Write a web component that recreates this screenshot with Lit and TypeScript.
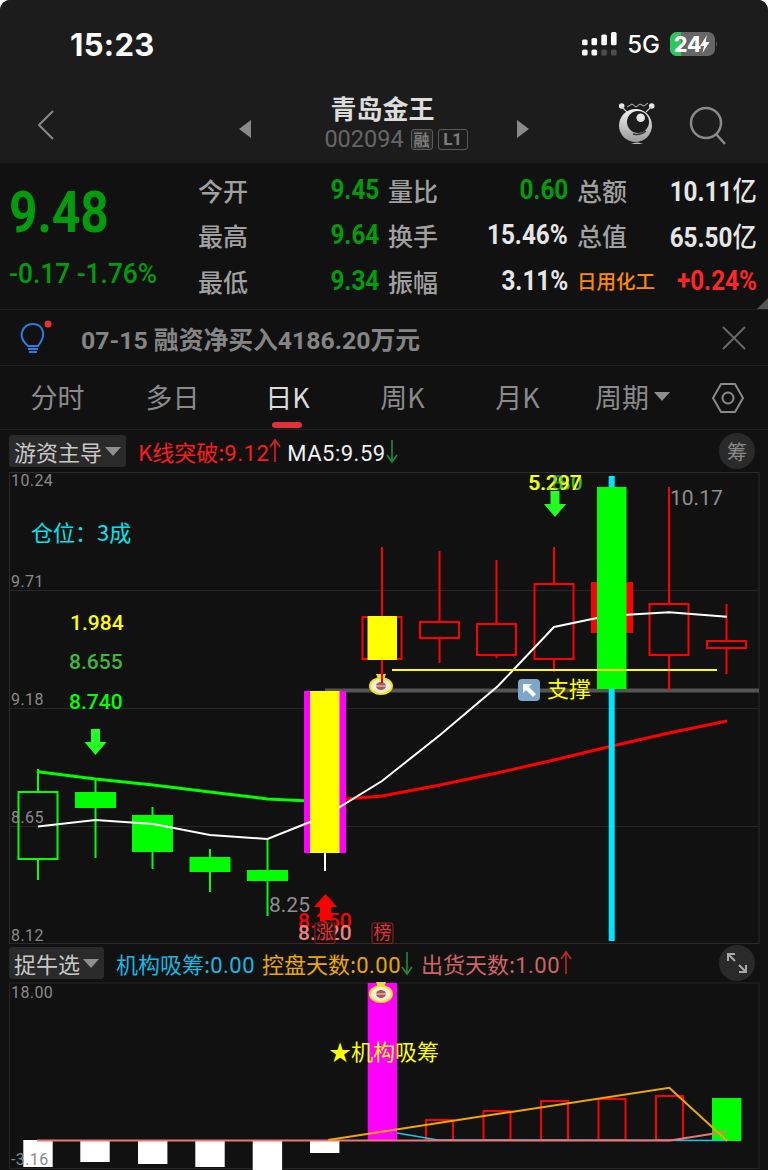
import { LitElement, html, svg, css } from 'lit';
import { customElement } from 'lit/decorators.js';

type Candle = {
    cx: number;
    top: number;
    bottom: number;
    high: number;
    low: number;
    color: string;
    filled: boolean;
};

const GREEN = '#00ff00';
const RED = '#ff0000';

const candles: Candle[] = [
    { cx: 38, top: 792, bottom: 859, high: 769, low: 880, color: GREEN, filled: false },
    { cx: 95.5, top: 793, bottom: 807, high: 779, low: 858, color: GREEN, filled: true },
    { cx: 152.5, top: 816, bottom: 851, high: 807, low: 869, color: GREEN, filled: true },
    { cx: 210, top: 858, bottom: 871, high: 849, low: 892, color: GREEN, filled: true },
    { cx: 267.5, top: 871, bottom: 880, high: 839, low: 916, color: GREEN, filled: true },
    { cx: 382, top: 617, bottom: 659, high: 547, low: 683, color: RED, filled: false },
    { cx: 439.5, top: 622, bottom: 638, high: 551, low: 663, color: RED, filled: false },
    { cx: 496.5, top: 624, bottom: 655, high: 560, low: 658, color: RED, filled: false },
    { cx: 554, top: 584, bottom: 659, high: 547, low: 672, color: RED, filled: false },
    { cx: 669, top: 604, bottom: 655, high: 487, low: 690, color: RED, filled: false },
    { cx: 726.5, top: 641, bottom: 648, high: 604, low: 674, color: RED, filled: false },
];

const MA5 = '38,826.5 95.5,820 153,824 210,835 267.5,839 325,816 382,781 440,735 498,686 554,627 597,618 627,614.7 669,612.3 727,616.7';
const MA_GREEN = '38,771.7 95.5,779 153,785 210,792 267.5,799 304,800.7';
const MA_RED = '346,799 382,796 440,785 497,773 554,760 612,746 669,733 727,721';

const moneyBag = (x: number, y: number) => svg`
    <g transform="translate(${x} ${y})">
        <path d="M-5 -11 L5 -11 L3 -6 L-3 -6 Z" fill="#e8d84a" />
        <ellipse cx="0" cy="1" rx="11" ry="8" fill="#f4f0d8" stroke="#f2e21c" stroke-width="2" />
        <ellipse cx="0" cy="1" rx="5" ry="4" fill="#a85a5a" />
        <line x1="-5" y1="1" x2="5" y2="1" stroke="#f0dede" stroke-width="1" />
    </g>
`;

const downArrow = (x: number, y: number) => svg`
    <polygon
        points="${x - 4.5},${y} ${x + 4.5},${y} ${x + 4.5},${y + 13} ${x + 11},${y + 13} ${x},${y + 26} ${x - 11},${y + 13} ${x - 4.5},${y + 13}"
        fill="#22ff22"
    />
`;

@customElement('kline-chart')
class KlineChart extends LitElement {
    static styles = css`
      :host {
        display: block;
        height: 472px;
      }

      svg {
        display: block;
      }

      text {
        font-family: Roboto, "Noto Sans CJK SC", sans-serif;
      }

      .axis {
        fill: #8a8a8a;
        font-size: 16px;
        letter-spacing: 0.4px;
      }

      .big {
        fill: #8e8e8e;
        font-size: 21px;
      }

      .note {
        font-size: 21px;
        font-weight: 500;
      }

      text.cjk {
        font-family: "Noto Sans CJK SC", sans-serif;
      }
    `;

    private candle(c: Candle) {
        return svg`
            <line x1=${c.cx} x2=${c.cx} y1=${c.high} y2=${c.filled ? c.low : c.top} stroke=${c.color} stroke-width="2" />
            ${c.filled
                ? null
                : svg`<line x1=${c.cx} x2=${c.cx} y1=${c.bottom} y2=${c.low} stroke=${c.color} stroke-width="2" />`}
            <rect
                x=${c.cx - 19.5}
                y=${c.top}
                width="39"
                height=${c.bottom - c.top}
                fill=${c.filled ? c.color : 'none'}
                stroke=${c.color}
                stroke-width="2"
            />
        `;
    }

    protected render() {
        return html`
            <svg width="768" height="472" viewBox="0 472 768 472">
                <g stroke="#262626" stroke-width="1" fill="none">
                    <rect x="9.5" y="472.5" width="749.5" height="471" stroke="#2a2a2a" />
                    <line x1="10" x2="759" y1="590.5" y2="590.5" />
                    <line x1="10" x2="759" y1="708.5" y2="708.5" />
                    <line x1="10" x2="759" y1="826.5" y2="826.5" />
                </g>

                <line x1="325" x2="759" y1="690.5" y2="690.5" stroke="#555" stroke-width="4" />

                <polyline points=${MA_GREEN} fill="none" stroke=${GREEN} stroke-width="3" />
                <polyline points=${MA_RED} fill="none" stroke=${RED} stroke-width="3" />

                ${candles.map((c) => this.candle(c))}

                <rect x="591" y="582" width="42" height="51" fill=${RED} />

                <rect x="304" y="691" width="42" height="162" fill="#ff00ff" />
                <line x1="325" x2="325" y1="853" y2="871" stroke="#fff" stroke-width="2" />
                <polyline points=${MA5} fill="none" stroke="#fff" stroke-width="2" />
                <rect x="310" y="691" width="29.5" height="162" fill="#ffff00" />
                <rect x="367.5" y="616" width="29.5" height="44" fill="#ffff00" />

                <rect x="608.7" y="476" width="6" height="465" fill="#00e5ff" />
                <rect x="597" y="487" width="29.5" height="202" fill=${GREEN} />

                ${moneyBag(381, 685)}
                <line x1="382" x2="382" y1="660" y2="683" stroke=${RED} stroke-width="2" />
                <line x1="392" x2="717" y1="670" y2="670" stroke="#ffff00" stroke-width="2" />

                <text class="axis" x="11" y="486">10.24</text>
                <text class="axis" x="11" y="587">9.71</text>
                <text class="axis" x="11" y="705">9.18</text>
                <text class="axis" x="11" y="823">8.65</text>
                <text class="axis" x="11" y="941">8.12</text>

                <rect x="518" y="679" width="22" height="22" rx="4" fill="#7ea6c8" />
                <path d="M523 684 H532 L529 687 L536 694 L533 697 L526 690 L523 693 Z" fill="#fff" />
                <text class="cjk" x="547" y="697" font-size="22" fill="#ffff00">支撑</text>

                <text class="cjk" x="31" y="541" font-size="22" fill="#00e5ee">仓位：3成</text>
                <text class="note" x="70" y="630" fill="#ffff00">1.984</text>
                <text class="note" x="69" y="669" fill="#3cb83c">8.655</text>
                <text class="note" x="69" y="709" fill=${GREEN}>8.740</text>
                ${downArrow(95.5, 729)}

                ${downArrow(555, 491)}
                <text class="note" x="529" y="490" fill="#3cb83c">5.280</text>
                <text class="note" x="528" y="490" fill="#ffff00">5.297</text>
                <text class="note" x="546" y="490" fill="#3cb83c" fill-opacity="0.6">.8</text>

                <text class="big" x="670" y="505">10.17</text>
                <text class="big" x="269" y="912">8.25</text>

                <polygon
                    points="325.5,894 337,907 331,907 331,920 320,920 320,907 314,907"
                    fill=${RED}
                />
                <text class="note" x="298" y="928" fill=${RED}>8.350</text>
                <text class="note" x="298" y="940" fill="#f08080">8.320</text>
                <rect x="315" y="923" width="20" height="20.500" rx="2" fill="#111" fill-opacity="0.85" stroke="#a02020" />
                <text class="cjk" x="325" y="939" font-size="18" text-anchor="middle" fill="#e03030">涨</text>
                <rect x="372" y="923" width="21" height="20.500" rx="2" fill="none" stroke="#a02020" />
                <text class="cjk" x="382.5" y="939" font-size="18" text-anchor="middle" fill="#e03030">榜</text>
            </svg>
        `;
    }
}

const subBars = [
    { x: 23.3, bottom: 1167 },
    { x: 80.3, bottom: 1162 },
    { x: 138, bottom: 1164 },
    { x: 195.3, bottom: 1167 },
    { x: 252.7, bottom: 1170 },
    { x: 310, bottom: 1153 },
];

const subHollow = [
    { x: 426, top: 1120 },
    { x: 483.5, top: 1111 },
    { x: 541, top: 1101 },
    { x: 598.5, top: 1099 },
    { x: 656, top: 1096 },
];

@customElement('sub-chart')
class SubChart extends LitElement {
    static styles = css`
      :host {
        display: block;
        height: 188px;
      }

      svg {
        display: block;
      }

      .axis {
        font-family: Roboto, sans-serif;
        fill: #8a8a8a;
        font-size: 16px;
        letter-spacing: 0.4px;
      }

      .label {
        font-family: "Noto Sans CJK SC", sans-serif;
        font-size: 22px;
        fill: #ffff00;
      }
    `;

    protected render() {
        return html`
            <svg width="768" height="188" viewBox="0 982 768 188">
                <rect x="9.5" y="983" width="749.5" height="185.5" fill="none" stroke="#262626" />
                <text class="axis" x="11" y="998">18.00</text>

                ${subBars.map(
                    (b) => svg`<rect x=${b.x} y="1140" width="29.4" height=${b.bottom - 1140} fill="#fff" />`
                )}
                <text class="axis" x="11" y="1165">-3.16</text>

                <rect x="367.7" y="983" width="29.4" height="158" fill="#ff00ff" />
                ${moneyBag(381, 993)}

                ${subHollow.map(
                    (b) => svg`
                        <rect
                            x=${b.x}
                            y=${b.top}
                            width="27"
                            height=${1140 - b.top}
                            fill="none"
                            stroke="#ff0000"
                            stroke-width="2"
                        />
                    `
                )}
                <rect x="712" y="1098" width="29.4" height="43" fill="#00ff00" />

                <polyline points="397,1133 438,1140 727,1140.5" fill="none" stroke="#18c8e8" stroke-width="1.5" />
                <polyline points="37,1140.5 670,1140.5 727,1131.5" fill="none" stroke="#e87878" stroke-width="2" />
                <polyline points="328,1140 669.3,1087.7 727.3,1141" fill="none" stroke="#f0a800" stroke-width="2" />

                <text class="label" x="329" y="1060">★机构吸筹</text>
            </svg>
        `;
    }
}

@customElement('app-root')
class AppRoot extends LitElement {
    static styles = css`
      :host {
        display: block;
        width: 768px;
        height: 1170px;
        overflow: hidden;
        background: #fff;
        font-family: "Noto Sans CJK SC", sans-serif;
      }

      .screen {
        height: 1170px;
        background: #111111;
        border-radius: 10px 10px 0 0;
        overflow: hidden;
      }

      .num {
        font-family: Roboto, "Noto Sans CJK SC", sans-serif;
      }

      /* top part, status bar and stock title */
      .head {
        height: 163px;
        background: #1c1c1c;
        display: flex;
        flex-direction: column;
      }

      .status {
        height: 88px;
        display: flex;
        align-items: center;
        padding: 0 49px 0 70px;
        box-sizing: border-box;
      }

      .time {
        font-family: Inter, sans-serif;
        font-size: 31px;
        font-weight: 700;
        letter-spacing: 0.3px;
        color: #fff;
        flex: 1;
      }

      .net {
        font-family: Inter, sans-serif;
        font-size: 24px;
        font-weight: 500;
        color: #fff;
        margin: 0 10px;
      }

      .nav {
        flex: 1;
        display: flex;
        align-items: flex-start;
      }

      .back {
        width: 239px;
        padding: 22px 0 0 38px;
        box-sizing: border-box;
      }

      .pager {
        width: 12px;
        margin-top: 32px;
      }

      .title-box {
        width: 266px;
        display: flex;
        flex-direction: column;
        align-items: center;
        padding-top: 3px;
      }

      .title {
        font-size: 26px;
        font-weight: 700;
        line-height: 34px;
        margin-left: -3px;
        color: #dcdcdc;
      }

      .code {
        display: flex;
        align-items: center;
        gap: 5px;
        height: 24px;
        margin-top: 2px;
        margin-left: 24px;
        color: #666;
      }

      .code-no {
        font-size: 23.5px;
        margin-right: 2px;
      }

      .tag {
        height: 21px;
        border: 1px solid #5a5a5a;
        border-radius: 3px;
        background: #2a2a2a;
        box-sizing: border-box;
        display: flex;
        align-items: center;
        justify-content: center;
        font-size: 16px;
        font-weight: 700;
        color: #7c7c7c;
      }

      .tag-cn {
        width: 22px;
      }

      .tag-l1 {
        width: 30px;
        background: none;
        font-size: 17px;
      }

      .nav-icons {
        display: flex;
        align-items: flex-start;
        margin-left: 89px;
        gap: 31px;
        padding-top: 14px;
      }

      .search {
        margin-top: 4px;
      }

      /* quote block */
      .quote {
        height: 147px;
        position: relative;
        display: flex;
        box-sizing: border-box;
        border-bottom: 1px solid #1e1e1e;
      }

      .price {
        width: 198px;
        padding: 16px 0 0 9px;
        box-sizing: border-box;
        color: #009c0c;
      }

      .price-now {
        font-size: 57px;
        font-weight: 700;
        line-height: 68px;
        transform: scaleX(0.87);
        transform-origin: left;
      }

      .price-chg {
        margin-top: 11px;
        font-size: 28px;
        font-weight: 500;
        line-height: 32px;
        white-space: nowrap;
        transform: scaleX(0.94);
        transform-origin: left;
      }

      .stats {
        display: grid;
        grid-template-columns: 181px 9px 180px 9px 180px;
        grid-auto-rows: 45.5px;
        align-items: center;
        padding-top: 4px;
        width: 559px;
      }

      .cell {
        display: flex;
        justify-content: space-between;
        align-items: center;
        grid-column: span 1;
      }

      .gap {
        width: 9px;
      }

      .lbl {
        font-size: 25px;
        font-weight: 500;
        color: #a0a0a0;
      }

      .val {
        font-size: 27px;
        font-weight: 700;
        color: #e6e6e6;
        transform: scaleX(0.9);
        transform-origin: right;
        white-space: nowrap;
      }

      .val.down {
        color: #009c0c;
      }

      .val.up {
        color: #ff2626;
      }

      .val .unit {
        font-size: 27px;
        font-weight: 500;
      }

      .sector {
        font-size: 19.5px;
        font-weight: 500;
        color: #ff8a00;
      }

      .corner {
        position: absolute;
        right: 0;
        bottom: 0;
        width: 0;
        height: 0;
        border-left: 11px solid transparent;
        border-bottom: 11px solid #555;
      }

      /* notice line */
      .notice {
        height: 56px;
        display: flex;
        align-items: center;
        box-sizing: border-box;
        border-bottom: 1px solid #1e1e1e;
        padding-left: 20px;
      }

      .notice-text {
        margin-left: 25px;
        flex: 1;
        font-size: 24.8px;
        font-weight: 700;
        color: #858585;
      }

      .notice svg:last-child {
        margin-right: 22px;
      }

      /* period tabs */
      .tabs {
        height: 64px;
        display: grid;
        grid-template-columns: repeat(6, 115px) auto;
        box-sizing: border-box;
        border-bottom: 1px solid #1e1e1e;
        position: relative;
      }

      .tab {
        display: flex;
        align-items: center;
        justify-content: center;
        gap: 5px;
        padding-bottom: 2px;
        font-size: 27px;
        color: #8a8a8a;
      }

      .tab.on {
        color: #dcdcdc;
      }

      .tab-bar {
        position: absolute;
        left: 272px;
        top: 56px;
        width: 30px;
        height: 6px;
        border-radius: 3px;
        background: #e0303a;
      }

      .tab-gear {
        display: flex;
        align-items: center;
        padding-left: 22px;
      }

      .tri {
        width: 0;
        height: 0;
        border-left: 8px solid transparent;
        border-right: 8px solid transparent;
        border-top: 9px solid #8e8e8e;
      }

      /* indicator rows */
      .ind {
        display: flex;
        align-items: center;
        padding-left: 9px;
        box-sizing: border-box;
        font-size: 22px;
        white-space: nowrap;
        position: relative;
      }

      .ind-main {
        height: 42px;
      }

      .ind-sub {
        height: 38px;
      }

      .picker {
        height: 32px;
        display: flex;
        align-items: center;
        gap: 3px;
        padding: 0 5px;
        border-radius: 3px;
        background: #2a2a2a;
        color: #c8c8c8;
        margin-right: 12px;
      }

      .ind span.v {
        font-family: Roboto, sans-serif;
        letter-spacing: 0.5px;
      }

      .round {
        position: absolute;
        right: 13px;
        top: 50%;
        margin-top: -18px;
        width: 36px;
        height: 36px;
        border-radius: 50%;
        background: #2a2a2a;
        color: #8a8a8a;
        display: flex;
        align-items: center;
        justify-content: center;
        font-size: 20px;
      }

      .red { color: #ff1a1a; }
      .white { color: #f2f2f2; margin-left: 6px; }
      .cyan { color: #16b8e0; }
      .orange { color: #e8a800; margin-left: 7px; }
      .pink { color: #d06464; margin-left: 8px; }
    `;

    private arrow(dir: 'up' | 'down', color: string) {
        const d = dir === 'up' ? 'M6 24 V3 M1 9 L6 2 L11 9' : 'M6 2 V23 M1 17 L6 24 L11 17';
        return html`<svg width="12" height="26" viewBox="0 0 12 26" fill="none" stroke=${color} stroke-width="1.6">
            <path d=${d} />
        </svg>`;
    }

    private statusIcons() {
        const bars = [
            { x: 0, top: 7.5 },
            { x: 9.5, top: 6 },
            { x: 19.3, top: 2.5 },
            { x: 29, top: 0 },
        ];
        return html`
            <svg width="35" height="24" viewBox="0 0 35 24">
                ${bars.map(
                    (b, i) => svg`
                        <rect x=${b.x} y=${b.top} width="5.6" height=${13.3 - b.top} rx="1.6" fill="#fff" />
                        <rect x=${b.x} y="17.6" width="5.6" height="6" rx="1.6" fill=${i < 2 ? '#fff' : '#4d4d4d'} />
                    `
                )}
            </svg>
            <span class="net">5G</span>
            <svg width="49" height="24" viewBox="0 0 49 24">
                <rect width="45" height="24" rx="7" fill="#666" />
                <path d="M7 0 H11 V24 H7 A7 7 0 0 1 0 17 V7 A7 7 0 0 1 7 0 Z" fill="#2fc75a" />
                <text
                    x="4"
                    y="20"
                    font-family="Inter, sans-serif"
                    font-size="21"
                    font-weight="800"
                    fill="#fff"
                >24</text>
                <path d="M37 3 L30 14 H34 L32.500 21 L39.500 10 H35.500 Z" fill="#fff" />
                <path d="M46 9 Q48.500 12 46 15 Z" fill="#555" />
            </svg>
        `;
    }

    private robotIcon() {
        return html`
            <svg width="40" height="46" viewBox="0 0 40 46">
                <defs>
                    <linearGradient id="rb" x1="0" y1="0" x2="0" y2="1">
                        <stop offset="0" stop-color="#f0f0f0" />
                        <stop offset="1" stop-color="#9a9a9a" />
                    </linearGradient>
                </defs>
                <path d="M9 5 L14 2 L18 5 L22 2 L26 4 L30 1" fill="none" stroke="#c0c0c0" stroke-width="1" />
                <circle cx="3.700" cy="4" r="2.800" fill="#e6e6e6" />
                <circle cx="33.700" cy="4" r="2.800" fill="#e6e6e6" />
                <path d="M4 5 L9 10 M33 5 L28 10" stroke="#ccc" stroke-width="1.200" />
                <ellipse cx="17.500" cy="23.500" rx="16.500" ry="16.500" fill="url(#rb)" />
                <circle cx="20" cy="20" r="11" fill="#1c1c1c" />
                <circle cx="22.700" cy="15.700" r="4.300" fill="#e8e8e8" />
                <path d="M15 32 Q22 34 28 29" fill="none" stroke="#333" stroke-width="1.400" />
                <path d="M13 42 Q19 39 25 42 Z" fill="#bbb" />
            </svg>
        `;
    }

    protected render() {
        return html`
            <div class="screen">
                <div class="head">
                    <div class="status">
                        <span class="time">15:23</span>
                        ${this.statusIcons()}
                    </div>
                    <div class="nav">
                        <div class="back">
                            <svg width="16" height="30" viewBox="0 0 16 30" fill="none" stroke="#888" stroke-width="2">
                                <path d="M15 1 L1 15 L15 29" />
                            </svg>
                        </div>
                        <svg class="pager" height="18" viewBox="0 0 12 18"><path d="M12 0 V18 L0 9 Z" fill="#8a8a8a" /></svg>
                        <div class="title-box">
                            <div class="title">青岛金王</div>
                            <div class="code">
                                <span class="code-no num">002094</span>
                                <span class="tag tag-cn">融</span>
                                <span class="tag tag-l1 num">L1</span>
                            </div>
                        </div>
                        <svg class="pager" height="18" viewBox="0 0 12 18"><path d="M0 0 V18 L12 9 Z" fill="#8a8a8a" /></svg>
                        <div class="nav-icons">
                            ${this.robotIcon()}
                            <svg class="search" width="38" height="40" viewBox="0 0 38 40" fill="none" stroke="#8a8a8a" stroke-width="2.500">
                                <circle cx="17" cy="17" r="15" />
                                <path d="M27 28 L36 38" />
                            </svg>
                        </div>
                    </div>
                </div>

                <div class="quote">
                    <div class="price num">
                        <div class="price-now">9.48</div>
                        <div class="price-chg">-0.17 -1.76%</div>
                    </div>
                    <div class="stats">
                        <div class="cell"><span class="lbl">今开</span><span class="val down num">9.45</span></div>
                        <span class="gap"></span>
                        <div class="cell"><span class="lbl">量比</span><span class="val down num">0.60</span></div>
                        <span class="gap"></span>
                        <div class="cell"><span class="lbl">总额</span><span class="val num">10.11<span class="unit">亿</span></span></div>

                        <div class="cell"><span class="lbl">最高</span><span class="val down num">9.64</span></div>
                        <span class="gap"></span>
                        <div class="cell"><span class="lbl">换手</span><span class="val num">15.46%</span></div>
                        <span class="gap"></span>
                        <div class="cell"><span class="lbl">总值</span><span class="val num">65.50<span class="unit">亿</span></span></div>

                        <div class="cell"><span class="lbl">最低</span><span class="val down num">9.34</span></div>
                        <span class="gap"></span>
                        <div class="cell"><span class="lbl">振幅</span><span class="val num">3.11%</span></div>
                        <span class="gap"></span>
                        <div class="cell"><span class="sector">日用化工</span><span class="val up num">+0.24%</span></div>
                    </div>
                    <span class="corner"></span>
                </div>

                <div class="notice">
                    <svg width="36" height="36" viewBox="0 0 36 36" fill="none" stroke="#2a7de1" stroke-width="2">
                        <path d="M8 26 C2 21 1 16 2 12 C4 6 8 4 13 4 C18 4 22 7 23 12 C24 17 21 22 18 26 Z" />
                        <path d="M8 29 H18 M9 32 H17" />
                        <circle cx="28" cy="4" r="3.500" fill="#f03030" stroke="none" />
                    </svg>
                    <span class="notice-text num">07-15 融资净买入4186.20万元</span>
                    <svg width="24" height="24" viewBox="0 0 24 24" stroke="#6a6a6a" stroke-width="1.800">
                        <path d="M1 1 L23 23 M23 1 L1 23" />
                    </svg>
                </div>

                <div class="tabs">
                    <div class="tab">分时</div>
                    <div class="tab">多日</div>
                    <div class="tab on">日K</div>
                    <div class="tab">周K</div>
                    <div class="tab">月K</div>
                    <div class="tab">周期<span class="tri"></span></div>
                    <div class="tab-gear">
                        <svg width="32" height="30" viewBox="0 0 32 30" fill="none" stroke="#8a8a8a" stroke-width="2">
                            <path d="M9 1 H23 L31 15 L23 29 H9 L1 15 Z" />
                            <circle cx="16" cy="15" r="5.500" />
                        </svg>
                    </div>
                    <span class="tab-bar"></span>
                </div>

                <div class="ind ind-main">
                    <div class="picker">游资主导<span class="tri"></span></div>
                    <span class="red">K线突破:<span class="v">9.12</span></span>${this.arrow('up', '#e02020')}
                    <span class="white"><span class="v">MA5:9.59</span></span>${this.arrow('down', '#1f8a3a')}
                    <span class="round">筹</span>
                </div>
                <kline-chart></kline-chart>

                <div class="ind ind-sub">
                    <div class="picker">捉牛选<span class="tri"></span></div>
                    <span class="cyan">机构吸筹:<span class="v">0.00</span></span>
                    <span class="orange">控盘天数:<span class="v">0.00</span></span>${this.arrow('down', '#1f8a3a')}
                    <span class="pink">出货天数:<span class="v">1.00</span></span>${this.arrow('up', '#c02828')}
                    <span class="round">
                        <svg width="20" height="20" viewBox="0 0 20 20" fill="none" stroke="#a8a8a8" stroke-width="2">
                            <path d="M1 8 V1 H8 M1 1 L8 8 M19 12 V19 H12 M19 19 L12 12" />
                        </svg>
                    </span>
                </div>
                <sub-chart></sub-chart>
            </div>
        `;
    }
}
